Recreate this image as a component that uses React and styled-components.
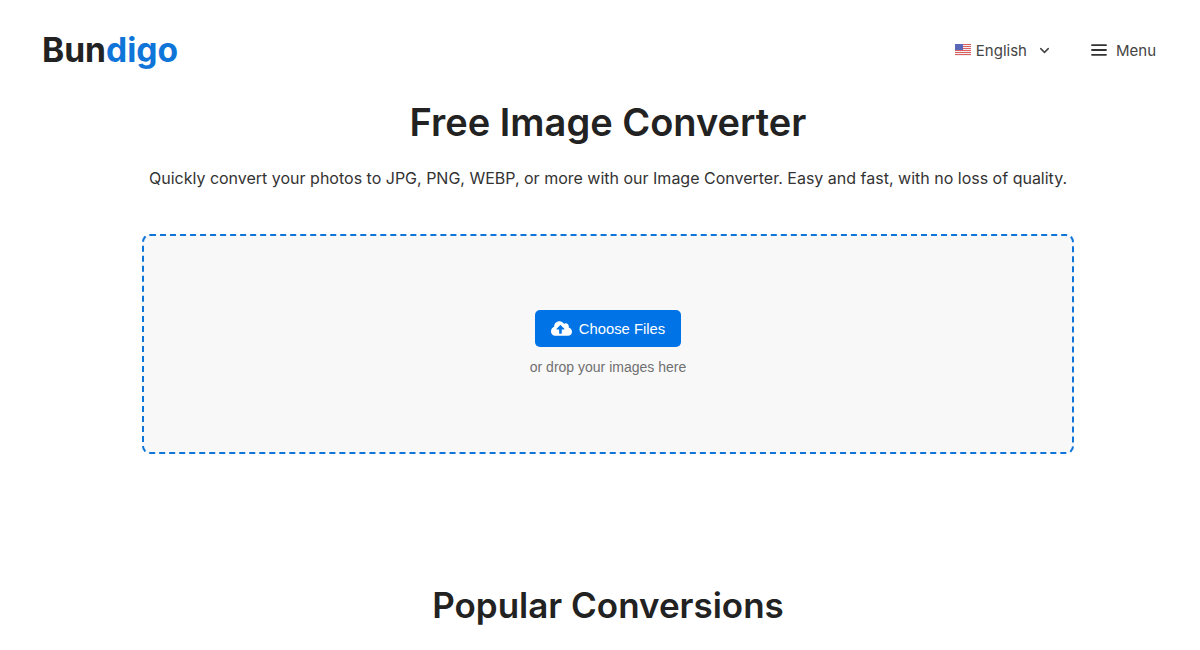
import React from 'react';
import styled, { createGlobalStyle } from 'styled-components';
import { FaCloudUploadAlt } from 'react-icons/fa';
import { ChevronDown } from 'lucide-react';

const GlobalStyle = createGlobalStyle`
  html, body {
    margin: 0;
    padding: 0;
    background: #fff;
    height: 650px;
    overflow: hidden;
    font-family: Inter, "Liberation Sans", sans-serif;
    color: #222;
  }
`;

const Page = styled.div`
  width: 1200px;
  height: 650px;
  overflow: hidden;
`;

const Header = styled.header`
  display: flex;
  align-items: center;
  justify-content: space-between;
  height: 100px;
  padding: 0 44px 0 42px;
  box-sizing: border-box;
`;

const Logo = styled.div`
  font-size: 33.6px;
  font-weight: 700;
  margin-top: -2px;
  color: #222;
  span {
    color: #0f75d8;
  }
`;

const Nav = styled.nav`
  display: flex;
  align-items: center;
  gap: 39px;
`;

const NavItem = styled.div`
  display: flex;
  align-items: center;
  height: 20px;
  font-size: 15px;
  color: #444;
`;

const Flag = styled.svg`
  width: 16px;
  height: 12px;
  margin-right: 5px;
`;

const Chevron = styled(ChevronDown)`
  margin-left: 10px;
  width: 15px;
  height: 15px;
  color: #444;
`;

const Burger = styled.svg`
  width: 16px;
  height: 12px;
  margin-right: 9px;
`;

const Main = styled.main`
  display: flex;
  flex-direction: column;
  align-items: center;
  padding-left: 16px;
`;

const Title = styled.h1`
  margin: -1px 0 0;
  font-size: 38px;
  line-height: 46px;
  font-weight: 600;
  color: #222;
`;

const Lead = styled.p`
  margin: 21px 0 0;
  font-size: 16px;
  line-height: 24px;
  color: #333;
`;

const DropZone = styled.div`
  width: 932px;
  height: 220px;
  margin-top: 44px;
  padding-bottom: 2px;
  box-sizing: border-box;
  border: 2px dashed #0f75d8;
  border-radius: 8px;
  background: #f8f8f8;
  display: flex;
  flex-direction: column;
  align-items: center;
  justify-content: center;
`;

const ChooseButton = styled.button`
  display: flex;
  align-items: center;
  justify-content: center;
  gap: 7px;
  width: 146px;
  height: 37px;
  border: 0;
  border-radius: 5px;
  background: #0073e6;
  color: #fff;
  font-family: "Liberation Sans", sans-serif;
  font-size: 14.8px;
  svg {
    width: 21px;
    height: 17px;
  }
`;

const DropHint = styled.div`
  margin-top: 11px;
  font-family: "Liberation Sans", sans-serif;
  font-size: 14px;
  line-height: 18px;
  color: #707070;
`;

const SectionTitle = styled.h2`
  margin: 129px 0 0;
  font-size: 35px;
  line-height: 44px;
  font-weight: 600;
  color: #222;
`;

const stripes = [0, 2, 4, 6, 8, 10];

export default function App() {
  return (
    <Page>
      <GlobalStyle />
      <Header>
        <Logo>Bun<span>digo</span></Logo>
        <Nav>
          <NavItem>
            <Flag viewBox="0 0 16 12">
              <rect width="16" height="12" fill="#f3eef0" />
              {stripes.map((y) => (
                <rect key={y} y={y} width="16" height="1" fill="#d9605f" />
              ))}
              <rect width="8" height="6" fill="#5a66b8" />
            </Flag>
            English
            <Chevron strokeWidth={2.4} />
          </NavItem>
          <NavItem>
            <Burger viewBox="0 0 16 12">
              <path d="M1 1.2h14M1 6h14M1 10.8h14" stroke="#333" strokeWidth="1.8" strokeLinecap="round" />
            </Burger>
            Menu
          </NavItem>
        </Nav>
      </Header>
      <Main>
        <Title>Free Image Converter</Title>
        <Lead>Quickly convert your photos to JPG, PNG, WEBP, or more with our Image Converter. Easy and fast, with no loss of quality.</Lead>
        <DropZone>
          <ChooseButton>
            <FaCloudUploadAlt />
            Choose Files
          </ChooseButton>
          <DropHint>or drop your images here</DropHint>
        </DropZone>
        <SectionTitle>Popular Conversions</SectionTitle>
      </Main>
    </Page>
  );
}
